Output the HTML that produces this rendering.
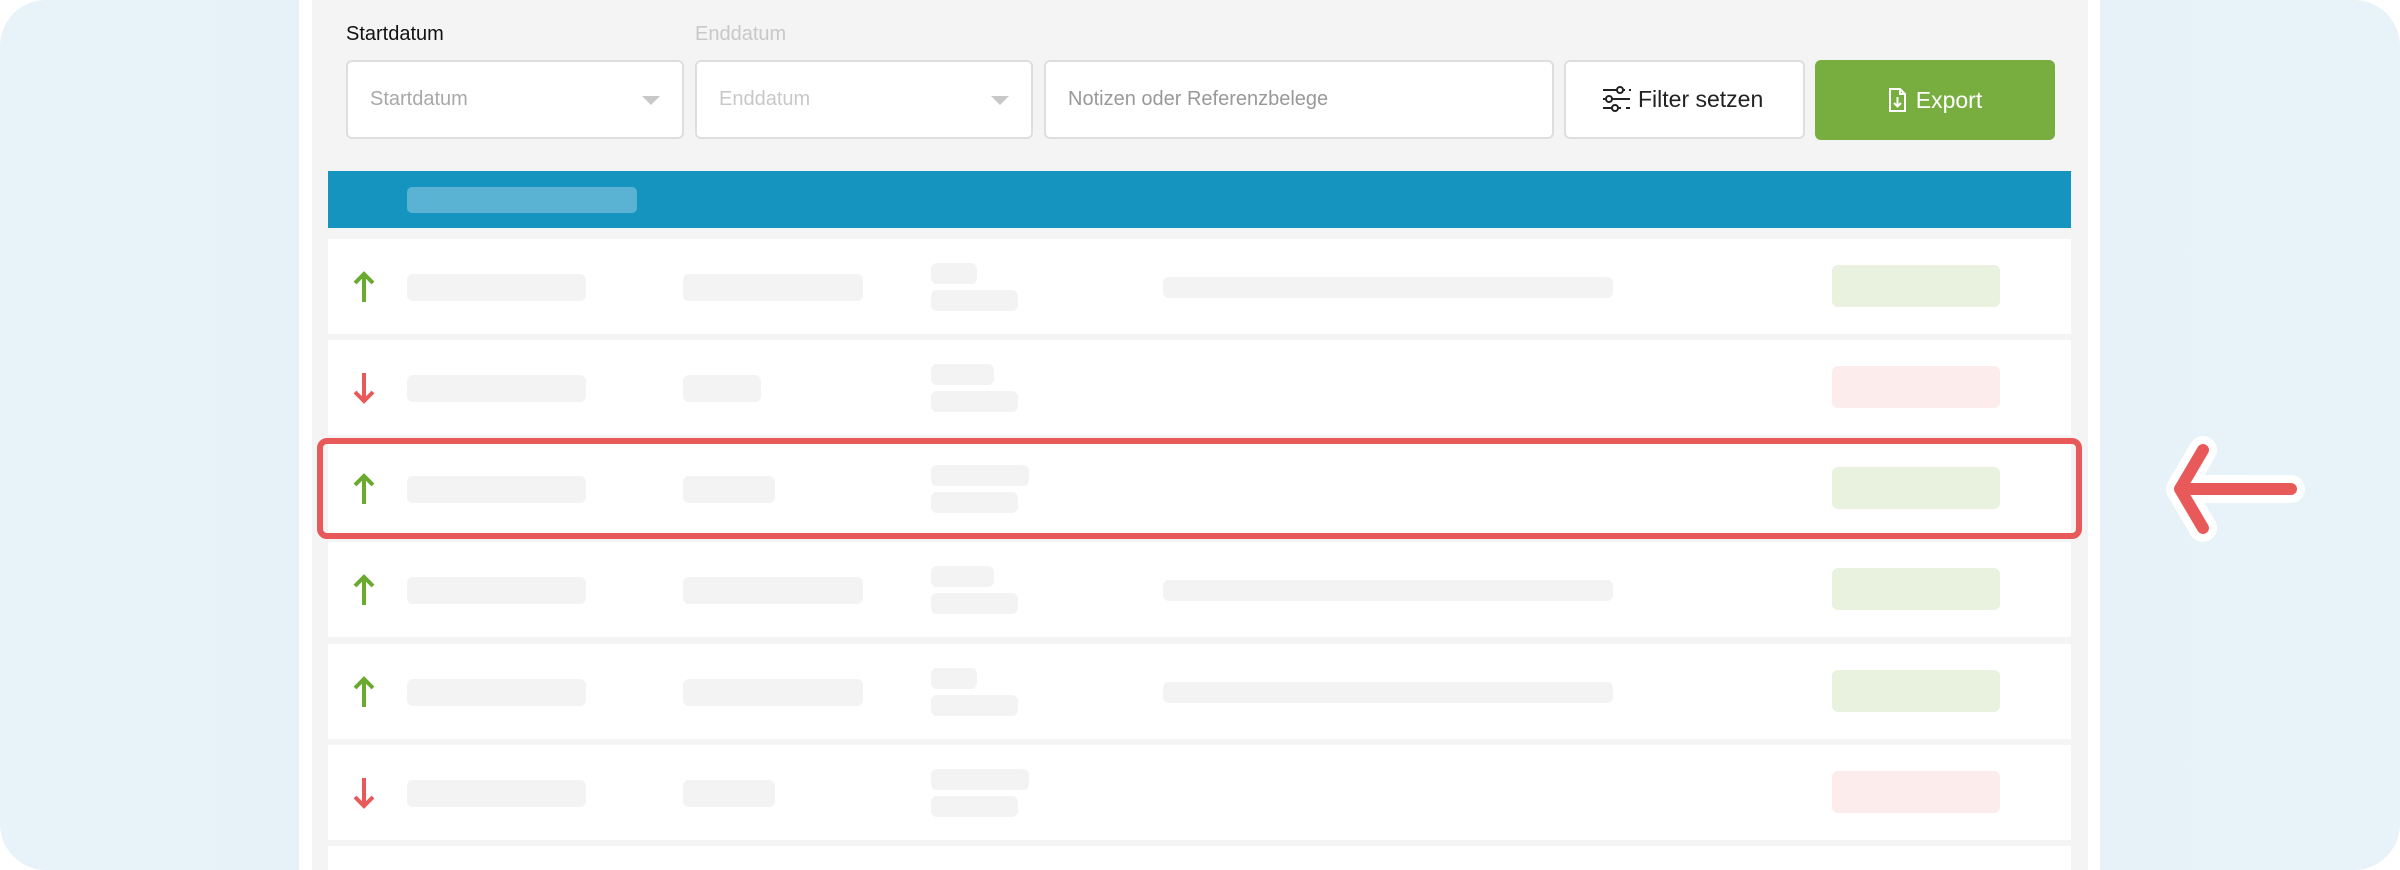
<!DOCTYPE html>
<html style="overflow:hidden;height:870px"><head><meta charset="utf-8"><style>
*{box-sizing:border-box;margin:0;padding:0}
body{width:2400px;height:870px;overflow:hidden;background:#fff;font-family:"Liberation Sans",sans-serif;position:relative}
.wrap{position:absolute;left:0;top:0;width:2400px;height:870px;overflow:hidden}
.bg{position:absolute;left:0;top:0;width:2400px;height:870px;border-radius:46px;background:linear-gradient(90deg,#e8f3f9,#e2eff7 50%,#e8f3f9)}
.panel{position:absolute;left:299px;top:0;width:1801px;height:870px;background:#fff}
.gray{position:absolute;left:312px;top:0;width:1776px;height:870px;background:#f4f4f4}
.lbl{position:absolute;top:23px;font-size:20px}
.inp{position:absolute;top:60px;height:79px;background:#fff;border:2px solid #dedede;border-radius:6px;font-size:20px;color:#a8a8a8;line-height:75px;padding-left:22px}
.tri{position:absolute;right:22px;top:34px;width:0;height:0;border-left:9px solid transparent;border-right:9px solid transparent;border-top:9px solid #c8c8c8}
.hdr{position:absolute;left:328px;top:171px;width:1743px;height:57px;background:#1594c0}
.hp{position:absolute;left:79px;top:16px;width:230px;height:26px;border-radius:5px;background:#5bb3d3}
.row{position:absolute;left:328px;width:1743px;height:95px;background:#fff}
.p{position:absolute;background:#f3f3f3;border-radius:6px}
.amt{position:absolute;left:1504px;top:26px;width:168px;height:42px;border-radius:6px}
.g{background:#e8f2de}.r{background:#fcecec}
.ar{position:absolute;left:24px;top:32px}
</style></head><body><div class="wrap">
<div class="bg"></div>
<div class="panel"></div>
<div class="gray"></div>
<div class="lbl" style="left:346px;color:#111">Startdatum</div>
<div class="lbl" style="left:695px;color:#c8c8c8">Enddatum</div>
<div class="inp" style="left:346px;width:338px">Startdatum<div class="tri"></div></div>
<div class="inp" style="left:695px;width:338px;color:#c8c8c8">Enddatum<div class="tri"></div></div>
<div class="inp" style="left:1044px;width:510px;color:#999">Notizen oder Referenzbelege</div>
<div class="inp" style="left:1564px;width:241px;color:#222;font-size:23px;padding-left:36px;line-height:75px">
<svg width="30" height="28" viewBox="0 0 30 28" style="vertical-align:-6px;margin-right:6px" fill="none" stroke="#222" stroke-width="2"><path d="M1 5h14M21 5h2M27 5h2M1 14h3M10 14h18M1 23h9M16 23h3M24 23h4"/><circle cx="18" cy="5" r="3"/><circle cx="7" cy="14" r="3"/><circle cx="13" cy="23" r="3"/></svg>Filter setzen</div>
<div style="position:absolute;left:1815px;top:60px;width:240px;height:80px;background:#78ae3f;border-radius:6px;color:#fff;font-size:23px;line-height:80px;text-align:center">
<svg width="18" height="24" viewBox="0 0 18 24" style="vertical-align:-4px;margin-right:10px" fill="none" stroke="#fff" stroke-width="2"><path d="M2 1h10l5 5v17H2z M12 1v5h5 M9.5 9v9 M6 15l3.5 3.5L13 15"/></svg>Export</div>
<div class="hdr"><div class="hp"></div></div>

<div class="row" style="top:239px">
<svg class="ar" width="24" height="32" viewBox="0 0 24 32"><path d="M12 31V3M3 12l9-9 9 9" fill="none" stroke="#6aaa2f" stroke-width="4"/></svg>
<div class="p" style="left:79px;top:35px;width:179px;height:27px"></div>
<div class="p" style="left:355px;top:35px;width:180px;height:27px"></div>
<div class="p" style="left:603px;top:24px;width:46px;height:21px"></div>
<div class="p" style="left:603px;top:51px;width:87px;height:21px"></div>
<div class="p" style="left:835px;top:38px;width:450px;height:21px"></div>
<div class="amt g"></div></div>

<div class="row" style="top:340px">
<svg class="ar" width="24" height="32" viewBox="0 0 24 32"><path d="M12 1v28M3 20l9 9 9-9" fill="none" stroke="#e85a5a" stroke-width="4"/></svg>
<div class="p" style="left:79px;top:35px;width:179px;height:27px"></div>
<div class="p" style="left:355px;top:35px;width:78px;height:27px"></div>
<div class="p" style="left:603px;top:24px;width:63px;height:21px"></div>
<div class="p" style="left:603px;top:51px;width:87px;height:21px"></div>
<div class="amt r"></div></div>

<div class="row" style="top:441px">
<svg class="ar" width="24" height="32" viewBox="0 0 24 32"><path d="M12 31V3M3 12l9-9 9 9" fill="none" stroke="#6aaa2f" stroke-width="4"/></svg>
<div class="p" style="left:79px;top:35px;width:179px;height:27px"></div>
<div class="p" style="left:355px;top:35px;width:92px;height:27px"></div>
<div class="p" style="left:603px;top:24px;width:98px;height:21px"></div>
<div class="p" style="left:603px;top:51px;width:87px;height:21px"></div>
<div class="amt g"></div></div>

<div class="row" style="top:542px">
<svg class="ar" width="24" height="32" viewBox="0 0 24 32"><path d="M12 31V3M3 12l9-9 9 9" fill="none" stroke="#6aaa2f" stroke-width="4"/></svg>
<div class="p" style="left:79px;top:35px;width:179px;height:27px"></div>
<div class="p" style="left:355px;top:35px;width:180px;height:27px"></div>
<div class="p" style="left:603px;top:24px;width:63px;height:21px"></div>
<div class="p" style="left:603px;top:51px;width:87px;height:21px"></div>
<div class="p" style="left:835px;top:38px;width:450px;height:21px"></div>
<div class="amt g"></div></div>

<div class="row" style="top:644px">
<svg class="ar" width="24" height="32" viewBox="0 0 24 32"><path d="M12 31V3M3 12l9-9 9 9" fill="none" stroke="#6aaa2f" stroke-width="4"/></svg>
<div class="p" style="left:79px;top:35px;width:179px;height:27px"></div>
<div class="p" style="left:355px;top:35px;width:180px;height:27px"></div>
<div class="p" style="left:603px;top:24px;width:46px;height:21px"></div>
<div class="p" style="left:603px;top:51px;width:87px;height:21px"></div>
<div class="p" style="left:835px;top:38px;width:450px;height:21px"></div>
<div class="amt g"></div></div>

<div class="row" style="top:745px">
<svg class="ar" width="24" height="32" viewBox="0 0 24 32"><path d="M12 1v28M3 20l9 9 9-9" fill="none" stroke="#e85a5a" stroke-width="4"/></svg>
<div class="p" style="left:79px;top:35px;width:179px;height:27px"></div>
<div class="p" style="left:355px;top:35px;width:92px;height:27px"></div>
<div class="p" style="left:603px;top:24px;width:98px;height:21px"></div>
<div class="p" style="left:603px;top:51px;width:87px;height:21px"></div>
<div class="amt r"></div></div>

<div class="row" style="top:846px;height:24px"></div>

<div style="position:absolute;left:317px;top:438px;width:1765px;height:101px;border:6px solid #e85a5a;border-radius:10px"></div>
<svg style="position:absolute;left:2160px;top:436px" width="145" height="106" viewBox="0 0 145 106">
<path d="M43 14L20 53l23 39M20 53h111" fill="none" stroke="#fff" stroke-width="28" stroke-linecap="round" stroke-linejoin="round"/>
<path d="M43 14L20 53l23 39M20 53h111" fill="none" stroke="#e85a5a" stroke-width="12" stroke-linecap="round" stroke-linejoin="round"/>
</svg>
</div></body></html>
